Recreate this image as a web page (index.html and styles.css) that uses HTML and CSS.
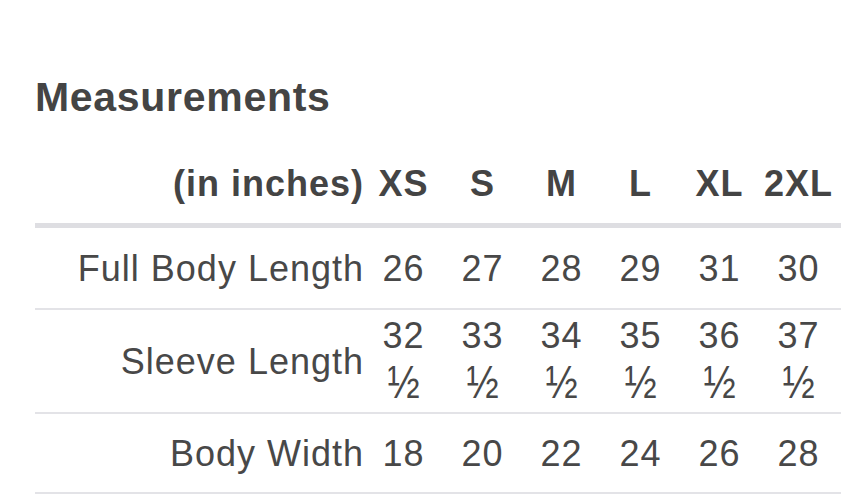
FILE: index.html
```html
<!DOCTYPE html>
<html lang="en">
<head>
<meta charset="utf-8">
<title>Measurements</title>
<link rel="stylesheet" href="styles.css">
</head>
<body>
<div class="page">
  <h2 class="title">Measurements</h2>
  <table class="sizes">
    <colgroup>
      <col class="c-label">
      <col class="c-size"><col class="c-size"><col class="c-size">
      <col class="c-size"><col class="c-size"><col class="c-last">
    </colgroup>
    <thead>
      <tr>
        <th class="label">(in inches)</th>
        <th>XS</th><th>S</th><th>M</th><th>L</th><th>XL</th><th class="last">2XL</th>
      </tr>
    </thead>
    <tbody>
      <tr>
        <td class="label">Full Body Length</td>
        <td>26</td><td>27</td><td>28</td><td>29</td><td>31</td><td class="last">30</td>
      </tr>
      <tr>
        <td class="label">Sleeve Length</td>
        <td>32 <span class="frac">½</span></td><td>33 <span class="frac">½</span></td><td>34 <span class="frac">½</span></td><td>35 <span class="frac">½</span></td><td>36 <span class="frac">½</span></td><td class="last">37 <span class="frac">½</span></td>
      </tr>
      <tr class="short">
        <td class="label">Body Width</td>
        <td>18</td><td>20</td><td>22</td><td>24</td><td>26</td><td class="last">28</td>
      </tr>
    </tbody>
  </table>
</div>
</body>
</html>
```

FILE: styles.css
```css
html, body {
  margin: 0;
  padding: 0;
  background: #ffffff;
}

body {
  font-family: "Liberation Sans", Arial, Helvetica, sans-serif;
  color: #444444;
  overflow: hidden;
}

.page {
  padding: 75px 0 0 35px;
}

.title {
  margin: 0 0 23px 0;
  font-size: 41px;
  line-height: 45px;
  font-weight: 700;
  letter-spacing: 0.7px;
  color: #444444;
}

.sizes {
  table-layout: fixed;
  width: 806px;
  border-collapse: collapse;
  border-spacing: 0;
  font-size: 36px;
  line-height: 51px;
  letter-spacing: 1px;
}

.c-label { width: 329px; }
.c-size { width: 79px; }
.c-last { width: 83px; }

.sizes th,
.sizes td {
  padding: 0 2px;
  text-align: center;
  vertical-align: middle;
}

.sizes th {
  height: 80px;
  font-weight: 700;
  color: #444444;
  border-bottom: 5px solid #dedee2;
}

.sizes td {
  height: 80px;
  font-weight: 400;
  color: #484848;
  border-bottom: 2px solid #e3e3e7;
}

.sizes .short td {
  height: 78px;
}

.sizes .label {
  text-align: right;
  padding-right: 0;
}

.sizes .last {
  padding-right: 6px;
}

.frac {
  display: inline-block;
  font-size: 42px;
  line-height: 40px;
  letter-spacing: 0;
  transform: scale(0.92, 1.1);
  transform-origin: 50% 100%;
}
```
